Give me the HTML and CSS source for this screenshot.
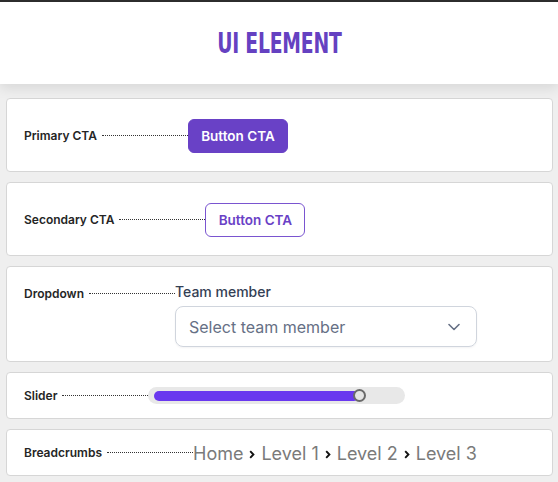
FILE: index.html
```html
<!DOCTYPE html>
<html>
<head>
<meta charset="utf-8">
<link rel="stylesheet" href="styles.css">
</head>
<body>
<div class="page">
  <div class="topbar"></div>
  <header class="header"><h1 class="title">UI ELEMENT</h1></header>
  <main class="cards">
    <section class="card card-cta">
      <span class="label">Primary CTA</span><span class="leader"></span>
      <button class="btn btn-primary">Button CTA</button>
    </section>
    <section class="card card-cta">
      <span class="label">Secondary CTA</span><span class="leader leader-sec"></span>
      <button class="btn btn-secondary">Button CTA</button>
    </section>
    <section class="card card-dropdown">
      <div class="label-row"><span class="label">Dropdown</span><span class="leader"></span></div>
      <div class="field">
        <span class="field-label">Team member</span>
        <div class="select">
          <span class="placeholder">Select team member</span>
          <svg class="chev" width="12" height="8" viewBox="0 0 12 8"><path d="M1 1.5l5 5 5-5" fill="none" stroke="#667085" stroke-width="1.6" stroke-linecap="round" stroke-linejoin="round"/></svg>
        </div>
      </div>
    </section>
    <section class="card card-small">
      <span class="label">Slider</span><span class="leader"></span>
      <div class="track">
        <div class="fill" style="width:205px"></div>
        <div class="thumb"></div>
      </div>
    </section>
    <section class="card card-small">
      <span class="label">Breadcrumbs</span><span class="leader"></span>
      <nav class="crumbs">
        <span class="crumb">Home</span>
        <svg class="sep" width="6" height="9" viewBox="0 0 6 9"><path d="M1.2 1.2l3.2 3.3-3.2 3.3" fill="none" stroke="#111" stroke-width="1.9"/></svg>
        <span class="crumb">Level 1</span>
        <svg class="sep" width="6" height="9" viewBox="0 0 6 9"><path d="M1.2 1.2l3.2 3.3-3.2 3.3" fill="none" stroke="#111" stroke-width="1.9"/></svg>
        <span class="crumb">Level 2</span>
        <svg class="sep" width="6" height="9" viewBox="0 0 6 9"><path d="M1.2 1.2l3.2 3.3-3.2 3.3" fill="none" stroke="#111" stroke-width="1.9"/></svg>
        <span class="crumb">Level 3</span>
      </nav>
    </section>
  </main>
</div>
</body>
</html>
```
FILE: styles.css
```css
* { box-sizing: border-box; }
html, body { margin: 0; padding: 0; }
body { font-family: Inter, "Noto Sans", sans-serif; background: #efefef; }
.page { min-height: 482px; background: #efefef; }
.topbar { height: 2px; background: #2e2e2e; }
.header {
  height: 82px;
  background: #fff;
  display: flex;
  align-items: center;
  justify-content: center;
  box-shadow: 0 4px 12px rgba(0,0,0,0.10);
  position: relative;
}
.title {
  margin: 0;
  font-family: "DejaVu Sans Condensed", sans-serif;
  font-weight: 700;
  font-size: 29px;
  color: #6541c1;
  letter-spacing: -0.3px;
  transform: scaleX(0.72);
}
.cards {
  padding: 14px 5px 0 6px;
  display: flex;
  flex-direction: column;
  gap: 10px;
}
.card {
  background: #fff;
  border: 1px solid #d6d6d6;
  border-radius: 4px;
  display: flex;
  align-items: center;
  padding: 0 17px 0 17px;
}
.card-cta { height: 74px; padding-top: 1px; }
.card-small { height: 47px; }
.card-dropdown { height: 96px; align-items: flex-start; padding-top: 15px; }
.label {
  font-size: 12px;
  font-weight: 600;
  color: #252525;
}
.leader {
  width: 86px;
  margin-left: 5px;
  border-top: 1px dotted #333;
  height: 0;
}
.label-row { display: flex; align-items: center; height: 22px; padding-top: 1px; }
.btn {
  font-family: Inter, sans-serif;
  font-size: 13.5px;
  font-weight: 600;
  height: 34px;
  width: 100px;
  border-radius: 6px;
  padding: 0;
  cursor: pointer;
}
.btn-primary { background: #6941c6; color: #fff; border: 1px solid #6941c6; }
.btn-secondary { background: #fff; color: #6941c6; border: 1px solid #7a55d0; }
.field { display: flex; flex-direction: column; gap: 4px; }
.field-label { font-size: 14px; font-weight: 500; color: #344054; line-height: 20px; }
.select {
  width: 302px;
  height: 41px;
  border: 1px solid #d0d5dd;
  border-radius: 8px;
  box-shadow: 0 1px 2px rgba(16,24,40,0.05);
  display: flex;
  align-items: center;
  justify-content: space-between;
  padding: 0 16px 0 13px;
}
.placeholder { font-size: 16px; color: #667085; }
.track {
  width: 257px;
  height: 17px;
  border-radius: 9px;
  background: #e8e8e8;
  display: flex;
  align-items: center;
  padding-left: 6px;
}
.fill { height: 10px; border-radius: 5px; background: #6938ef; }
.thumb {
  width: 13px;
  height: 13px;
  margin-left: -6px;
  border-radius: 50%;
  border: 2px solid #6a6a6a;
  background: #e4e4e4;
}
.crumbs { display: flex; align-items: center; gap: 6px; padding-top: 2px; }
.crumb { font-size: 18px; color: #7a7a7a; }
.sep { margin: 1px 0 0; }
```
